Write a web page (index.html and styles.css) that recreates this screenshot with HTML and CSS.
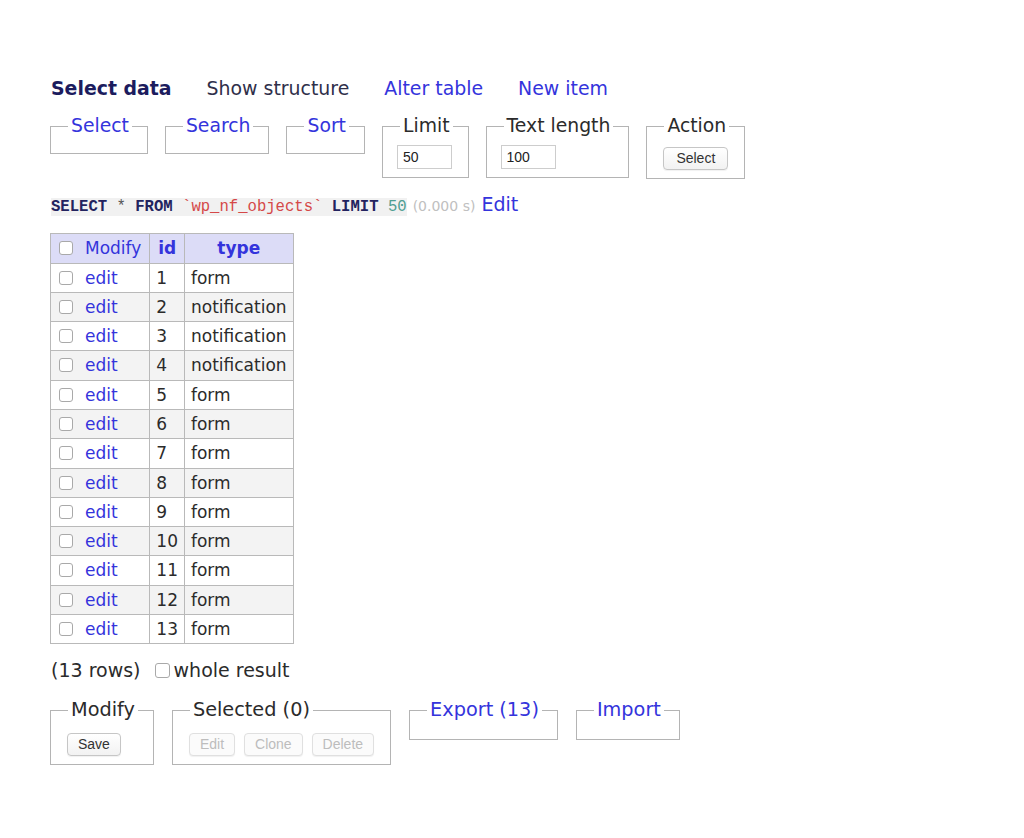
FILE: index.html
```html
<!DOCTYPE html>
<html>
<head>
<meta charset="utf-8">
<link rel="stylesheet" href="styles.css">
</head>
<body>
<div class="page">
  <p class="links">
    <span class="current">Select data</span>
    <a class="visited" href="#">Show structure</a>
    <a href="#">Alter table</a>
    <a href="#">New item</a>
  </p>

  <form class="controls">
    <fieldset class="fs"><legend><a href="#">Select</a></legend></fieldset>
    <fieldset class="fs"><legend><a href="#">Search</a></legend></fieldset>
    <fieldset class="fs"><legend><a href="#">Sort</a></legend></fieldset>
    <fieldset class="fs"><legend>Limit</legend><input class="num" type="text" value="50"></fieldset>
    <fieldset class="fs"><legend>Text length</legend><input class="num" type="text" value="100"></fieldset>
    <fieldset class="fs"><legend>Action</legend><button class="btn btn-wide" type="button">Select</button></fieldset>
  </form>

  <p class="sql">
    <code class="code"><span class="kw">SELECT</span> * <span class="kw">FROM</span> <span class="str">`wp_nf_objects`</span> <span class="kw">LIMIT</span> <span class="nm">50</span></code>
    <span class="time">(0.000 s)</span>
    <a href="#">Edit</a>
  </p>

  <table class="data">
    <thead>
      <tr>
        <th class="mod"><span class="cb"></span><a href="#">Modify</a></th>
        <th class="hid"><a href="#">id</a></th>
        <th class="htype"><a href="#">type</a></th>
      </tr>
    </thead>
    <tbody>
      <tr><td class="mod"><span class="cb"></span><a href="#">edit</a></td><td>1</td><td>form</td></tr>
      <tr class="odd"><td class="mod"><span class="cb"></span><a href="#">edit</a></td><td>2</td><td>notification</td></tr>
      <tr><td class="mod"><span class="cb"></span><a href="#">edit</a></td><td>3</td><td>notification</td></tr>
      <tr class="odd"><td class="mod"><span class="cb"></span><a href="#">edit</a></td><td>4</td><td>notification</td></tr>
      <tr><td class="mod"><span class="cb"></span><a href="#">edit</a></td><td>5</td><td>form</td></tr>
      <tr class="odd"><td class="mod"><span class="cb"></span><a href="#">edit</a></td><td>6</td><td>form</td></tr>
      <tr><td class="mod"><span class="cb"></span><a href="#">edit</a></td><td>7</td><td>form</td></tr>
      <tr class="odd"><td class="mod"><span class="cb"></span><a href="#">edit</a></td><td>8</td><td>form</td></tr>
      <tr><td class="mod"><span class="cb"></span><a href="#">edit</a></td><td>9</td><td>form</td></tr>
      <tr class="odd"><td class="mod"><span class="cb"></span><a href="#">edit</a></td><td>10</td><td>form</td></tr>
      <tr><td class="mod"><span class="cb"></span><a href="#">edit</a></td><td>11</td><td>form</td></tr>
      <tr class="odd"><td class="mod"><span class="cb"></span><a href="#">edit</a></td><td>12</td><td>form</td></tr>
      <tr><td class="mod"><span class="cb"></span><a href="#">edit</a></td><td>13</td><td>form</td></tr>
    </tbody>
  </table>

  <p class="count">(13 rows) <span class="cb cb-lg"></span>whole result</p>

  <form class="controls bottom">
    <fieldset class="fs"><legend>Modify</legend><button class="btn" type="button">Save</button></fieldset>
    <fieldset class="fs"><legend>Selected (0)</legend><button class="btn" type="button" disabled>Edit</button><button class="btn" type="button" disabled>Clone</button><button class="btn" type="button" disabled>Delete</button></fieldset>
    <fieldset class="fs"><legend><a href="#">Export (13)</a></legend></fieldset>
    <fieldset class="fs"><legend><a href="#">Import</a></legend></fieldset>
  </form>
</div>
</body>
</html>
```

FILE: styles.css
```css
html, body {
  margin: 0;
  padding: 0;
  background: #fff;
}

body {
  font-family: "DejaVu Sans", Verdana, sans-serif;
  font-size: 19px;
  color: #2b2b2b;
}

a {
  color: #3434dc;
  text-decoration: none;
}

.page {
  padding: 77px 50px 40px 51px;
}

.links {
  margin: 0;
  line-height: 22px;
  display: flex;
  gap: 35px;
  font-size: 18.9px;
}

.links .current {
  font-weight: bold;
  color: #1c1c5e;
}

.links .visited {
  color: #2f2f4a;
}

.controls {
  display: flex;
  align-items: flex-start;
  gap: 17px;
  margin: 16px 0 0 -1px;
}

.fs {
  margin: 0;
  border: 1px solid #b4b4b4;
  padding: 8px 14px 8px 14px;
  min-width: 0;
  flex: none;
}

.fs legend {
  padding: 0 3px;
  margin: 0 1px 0 3px;
  line-height: 22px;
  font-size: 18.8px;
}

.num {
  box-sizing: border-box;
  width: 55px;
  height: 24px;
  margin: 0;
  border: 1px solid #cdcdcd;
  padding: 0 5px;
  font-family: "Liberation Sans", Arial, sans-serif;
  font-size: 14px;
  color: #222;
  display: block;
}

.btn {
  box-sizing: border-box;
  height: 23px;
  margin: 1px 2px 0 2px;
  padding: 0 10px;
  border: 1px solid #c6c6c6;
  border-radius: 4px;
  background: linear-gradient(#ffffff, #f2f2f2);
  box-shadow: 0 1px 1px rgba(0,0,0,0.06);
  font-family: "Liberation Sans", Arial, sans-serif;
  font-size: 14px;
  color: #333;
}

.btn-wide {
  padding: 0 12px;
}

.btn + .btn {
  margin-left: 7px;
}

.btn:disabled {
  color: #bdbdbd;
  border-color: #e0e0e0;
  background: #fbfbfb;
}

.sql {
  margin: 16px 0 0 0;
  line-height: 18px;
  display: flex;
  align-items: baseline;
  gap: 6px;
}

.code {
  font-family: "Liberation Mono", "Courier New", monospace;
  font-size: 15.6px;
  background: #f1f1f1;
  color: #555;
  white-space: pre;
}

.kw {
  font-weight: bold;
  color: #23235f;
}

.str {
  color: #d54848;
}

.nm {
  color: #4f9e92;
}

.time {
  font-size: 14px;
  color: #c0c0c0;
}

.sql a {
  font-size: 19px;
}

.data {
  margin: 17px 0 0 -1px;
  border-collapse: collapse;
  font-size: 17px;
  border: 1px solid #aaa;
}

.data th, .data td {
  border: 1px solid #b9b9b9;
  padding: 4px 6px 4px 6px;
  line-height: 20.3px;
  text-align: left;
  white-space: nowrap;
}

.data thead th {
  background: #dcdcf7;
  height: 21px;
}

.data th.hid, .data th.htype {
  font-weight: bold;
  text-align: center;
}

.data th.htype {
  padding: 4px 20px;
}

.data th.mod {
  font-weight: normal;
}

.data td.mod, .data th.mod {
  padding-left: 8px;
  padding-right: 8px;
}

.data tr.odd td {
  background: #f3f3f3;
}

.cb {
  display: inline-block;
  box-sizing: border-box;
  width: 14px;
  height: 14px;
  border: 1px solid #a9a9a9;
  border-radius: 3px;
  background: #fff;
  vertical-align: -1px;
  margin-right: 12px;
}

.count {
  margin: 15px 0 0 0;
  line-height: 22px;
  font-size: 19px;
}

.cb-lg {
  width: 15px;
  height: 15px;
  margin-left: 8px;
  margin-right: 4px;
}

.bottom {
  margin-top: 18px;
  gap: 18px;
}

.bottom .fs {
  padding-top: 10px;
  padding-bottom: 8px;
}

.bottom .fs legend {
  font-size: 19.3px;
}

.bottom .btn {
  margin-left: 2px;
}

.bottom .btn + .btn {
  margin-left: 7px;
}
```
